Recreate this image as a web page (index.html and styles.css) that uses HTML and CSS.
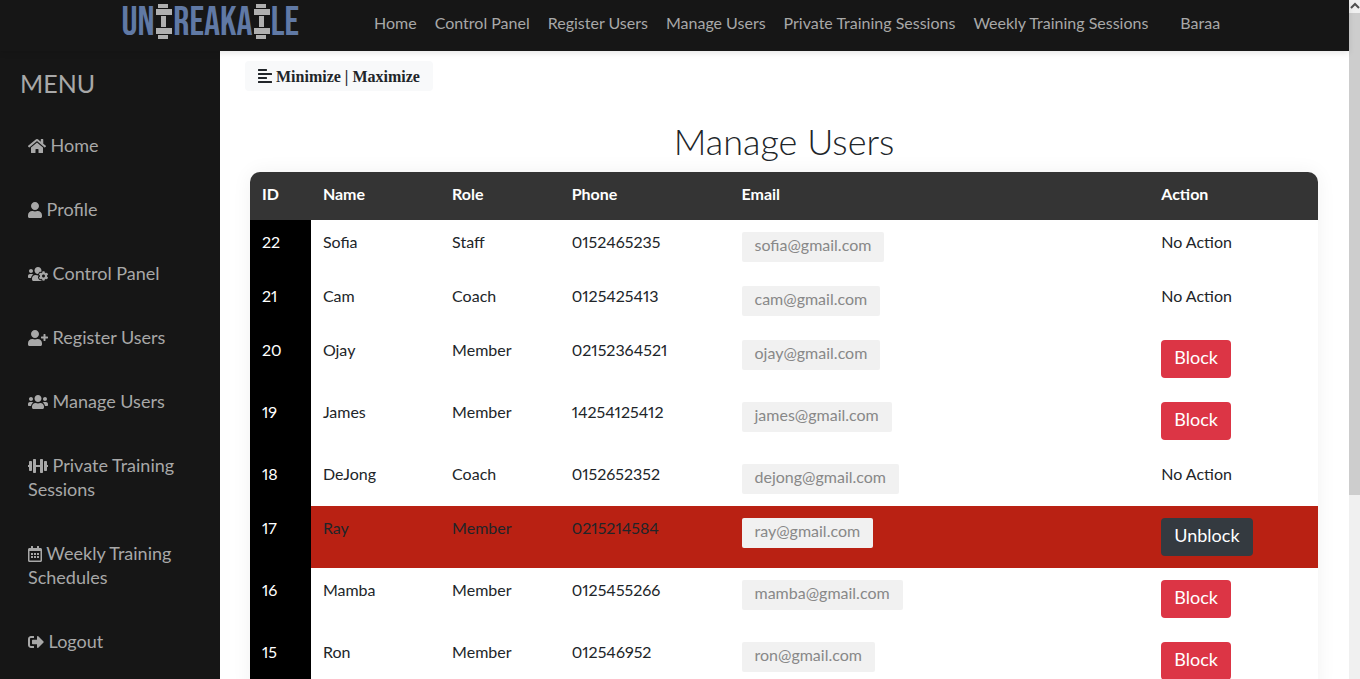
FILE: index.html
```html
<!DOCTYPE html>
<html lang="en">
<head>
<meta charset="utf-8">
<title>Manage Users</title>
<link rel="stylesheet" href="styles.css">
</head>
<body>
<div class="shell">
  <header class="topbar">
    <a class="brand" href="#" aria-label="Unbreakable">
      <svg class="brand-art" viewBox="0 0 176 38" width="176" height="38">
        <g class="brand-text" text-anchor="middle">
          <text x="15" y="31">UN</text>
          <text x="90" y="31">REAKA</text>
          <text x="162" y="31">LE</text>
        </g>
        <g id="bell" fill="#b0b0b0">
          <rect x="35" y="0" width="10" height="4"/>
          <rect x="33" y="5" width="16" height="6"/>
          <rect x="38" y="12" width="5" height="11"/>
          <rect x="33" y="24" width="16" height="6"/>
          <rect x="35" y="31" width="10" height="4"/>
        </g>
        <use href="#bell" x="98"/>
      </svg>
    </a>
    <nav class="topnav">
      <a href="#">Home</a>
      <a href="#">Control Panel</a>
      <a href="#">Register Users</a>
      <a href="#">Manage Users</a>
      <a href="#">Private Training Sessions</a>
      <a href="#">Weekly Training Sessions</a>
      <a href="#" class="account">Baraa</a>
    </nav>
  </header>
  <div class="body">
    <aside class="sidebar">
      <h3 class="menu-title">MENU</h3>
      <nav class="menu">
        <a href="#"><svg class="icon" width="18" height="16" viewBox="0 0 576 512"><path d="M280.37 148.26L96 300.11V464a16 16 0 0 0 16 16l112.06-.29a16 16 0 0 0 15.92-16V368a16 16 0 0 1 16-16h64a16 16 0 0 1 16 16v95.64a16 16 0 0 0 16 16.05L464 480a16 16 0 0 0 16-16V300L295.67 148.26a12.19 12.19 0 0 0-15.3 0zM571.6 251.47L488 182.56V44.05a12 12 0 0 0-12-12h-56a12 12 0 0 0-12 12v72.61L318.47 43a48 48 0 0 0-61 0L4.34 251.47a12 12 0 0 0-1.6 16.9l25.5 31A12 12 0 0 0 45.15 301l235.22-193.74a12.19 12.19 0 0 1 15.3 0L530.9 301a12 12 0 0 0 16.9-1.6l25.5-31a12 12 0 0 0-1.7-16.93z"/></svg> Home</a>
        <a href="#"><svg class="icon" width="14" height="16" viewBox="0 0 448 512"><path d="M224 256c70.7 0 128-57.3 128-128S294.7 0 224 0 96 57.3 96 128s57.3 128 128 128zm89.6 32h-16.7c-22.2 10.2-46.9 16-72.9 16s-50.6-5.8-72.9-16h-16.7C60.2 288 0 348.2 0 422.4V464c0 26.5 21.5 48 48 48h352c26.5 0 48-21.5 48-48v-41.6c0-74.2-60.2-134.4-134.4-134.4z"/></svg> Profile</a>
        <a href="#"><svg class="icon" width="20" height="16" viewBox="0 0 640 512"><path d="M610.5 341.3c2.6-14.1 2.6-28.5 0-42.6l25.8-14.9c3-1.7 4.3-5.2 3.3-8.5-6.7-21.6-18.2-41.2-33.2-57.4-2.3-2.5-6-3.1-9-1.4l-25.8 14.9c-10.9-9.3-23.4-16.5-36.9-21.3v-29.8c0-3.4-2.4-6.4-5.7-7.1-22.3-5-45-4.8-66.2 0-3.3.7-5.7 3.7-5.7 7.1v29.8c-13.5 4.8-26 12-36.9 21.3l-25.8-14.9c-2.9-1.7-6.7-1.1-9 1.4-15 16.2-26.5 35.8-33.2 57.4-1 3.3.4 6.8 3.3 8.5l25.8 14.9c-2.6 14.1-2.6 28.5 0 42.6l-25.8 14.9c-3 1.7-4.3 5.2-3.3 8.5 6.7 21.6 18.2 41.1 33.2 57.4 2.3 2.5 6 3.1 9 1.4l25.8-14.9c10.9 9.3 23.4 16.5 36.9 21.3v29.8c0 3.4 2.4 6.4 5.7 7.1 22.3 5 45 4.8 66.2 0 3.3-.7 5.7-3.7 5.7-7.1v-29.8c13.5-4.8 26-12 36.9-21.3l25.8 14.9c2.9 1.7 6.7 1.1 9-1.4 15-16.2 26.5-35.8 33.2-57.4 1-3.3-.4-6.8-3.3-8.5l-25.8-14.9zM496 368.5c-26.8 0-48.5-21.8-48.5-48.5s21.8-48.5 48.5-48.5 48.5 21.8 48.5 48.5-21.7 48.5-48.5 48.5zM96 224c35.3 0 64-28.7 64-64s-28.7-64-64-64-64 28.7-64 64 28.7 64 64 64zm224 32c1.9 0 3.7-.5 5.6-.6 8.3-21.7 20.5-42.1 36.3-59.2 7.4-8 17.9-12.6 28.9-12.6 6.9 0 13.7 1.8 19.6 5.3l7.9 4.6c.8-.5 1.6-.9 2.4-1.4 7-14.6 11.2-30.8 11.2-48 0-61.9-50.1-112-112-112S208 82.1 208 144c0 61.9 50.1 112 112 112zm105.2 194.5c-2.3-1.2-4.6-2.6-6.8-3.9-8.2 4.8-15.3 9.8-27.5 9.8-10.9 0-21.4-4.6-28.9-12.6-18.3-19.8-32.3-43.9-40.2-69.6-10.7-34.5 24.9-49.7 25.8-50.3-.1-2.6-.1-5.2 0-7.8l-7.9-4.6c-3.8-2.2-7-5-9.8-8.1-3.3.2-6.5.6-9.8.6-24.6 0-47.6-6-68.5-16h-8.3C179.6 288 128 339.6 128 403.2V432c0 26.5 21.5 48 48 48h255.4c-3.7-6-6.2-12.8-6.2-20.3v-9.2zM173.1 274.6C161.5 263.1 145.6 256 128 256H64c-35.3 0-64 28.7-64 64v32c0 17.7 14.3 32 32 32h65.9c6.3-47.4 34.9-87.3 75.2-109.4z"/></svg> Control Panel</a>
        <a href="#"><svg class="icon" width="20" height="16" viewBox="0 0 640 512"><path d="M624 208h-64v-64c0-8.800-7.200-16-16-16h-32c-8.800 0-16 7.200-16 16v64h-64c-8.800 0-16 7.200-16 16v32c0 8.800 7.200 16 16 16h64v64c0 8.800 7.200 16 16 16h32c8.800 0 16-7.200 16-16v-64h64c8.800 0 16-7.200 16-16v-32c0-8.800-7.200-16-16-16zm-400 48c70.700 0 128-57.300 128-128S294.700 0 224 0 96 57.300 96 128s57.300 128 128 128zm89.600 32h-16.700c-22.200 10.200-46.900 16-72.900 16s-50.600-5.800-72.900-16h-16.700C60.200 288 0 348.200 0 422.400V464c0 26.500 21.500 48 48 48h352c26.500 0 48-21.500 48-48v-41.600c0-74.200-60.200-134.400-134.400-134.400z"/></svg> Register Users</a>
        <a href="#"><svg class="icon" width="20" height="16" viewBox="0 0 640 512"><path d="M96 224c35.300 0 64-28.700 64-64s-28.700-64-64-64-64 28.700-64 64 28.700 64 64 64zm448 0c35.300 0 64-28.700 64-64s-28.700-64-64-64-64 28.700-64 64 28.700 64 64 64zm32 32h-64c-17.600 0-33.500 7.100-45.100 18.600 40.300 22.100 68.900 62 75.100 109.400h66c17.700 0 32-14.300 32-32v-32c0-35.300-28.700-64-64-64zm-256 0c61.900 0 112-50.100 112-112S381.900 32 320 32 208 82.100 208 144s50.100 112 112 112zm76.800 32h-8.300c-20.800 10-43.900 16-68.500 16s-47.600-6-68.500-16h-8.300C179.600 288 128 339.600 128 403.200V432c0 26.500 21.500 48 48 48h288c26.500 0 48-21.500 48-48v-28.800c0-63.600-51.600-115.200-115.200-115.200zm-223.700-13.400C161.500 263.100 145.600 256 128 256H64c-35.300 0-64 28.700-64 64v32c0 17.700 14.300 32 32 32h65.900c6.300-47.400 34.900-87.300 75.200-109.400z"/></svg> Manage Users</a>
        <a href="#"><svg class="icon" width="20" height="16" viewBox="0 0 640 512"><path d="M104 96H56c-13.300 0-24 10.700-24 24v104H8c-4.400 0-8 3.600-8 8v48c0 4.400 3.600 8 8 8h24v104c0 13.300 10.700 24 24 24h48c13.300 0 24-10.700 24-24V120c0-13.300-10.700-24-24-24zm528 128h-24V120c0-13.300-10.700-24-24-24h-48c-13.300 0-24 10.700-24 24v272c0 13.300 10.700 24 24 24h48c13.300 0 24-10.700 24-24V288h24c4.400 0 8-3.600 8-8v-48c0-4.400-3.600-8-8-8zM456 32h-48c-13.300 0-24 10.700-24 24v168H256V56c0-13.300-10.700-24-24-24h-48c-13.300 0-24 10.700-24 24v400c0 13.300 10.700 24 24 24h48c13.300 0 24-10.700 24-24V288h128v168c0 13.300 10.700 24 24 24h48c13.300 0 24-10.700 24-24V56c0-13.300-10.700-24-24-24z"/></svg> Private Training Sessions</a>
        <a href="#"><svg class="icon" width="14" height="16" viewBox="0 0 448 512"><path d="M148 288h-40c-6.600 0-12-5.400-12-12v-40c0-6.600 5.400-12 12-12h40c6.600 0 12 5.400 12 12v40c0 6.600-5.400 12-12 12zm108-12v-40c0-6.600-5.400-12-12-12h-40c-6.600 0-12 5.400-12 12v40c0 6.600 5.400 12 12 12h40c6.600 0 12-5.400 12-12zm96 0v-40c0-6.600-5.400-12-12-12h-40c-6.600 0-12 5.400-12 12v40c0 6.600 5.400 12 12 12h40c6.600 0 12-5.400 12-12zm-96 96v-40c0-6.600-5.400-12-12-12h-40c-6.600 0-12 5.400-12 12v40c0 6.600 5.400 12 12 12h40c6.600 0 12-5.400 12-12zm-96 0v-40c0-6.600-5.400-12-12-12h-40c-6.600 0-12 5.400-12 12v40c0 6.600 5.400 12 12 12h40c6.600 0 12-5.400 12-12zm192 0v-40c0-6.600-5.400-12-12-12h-40c-6.600 0-12 5.400-12 12v40c0 6.600 5.400 12 12 12h40c6.600 0 12-5.400 12-12zm96-260v352c0 26.500-21.500 48-48 48H48c-26.500 0-48-21.500-48-48V112c0-26.500 21.500-48 48-48h48V12c0-6.600 5.400-12 12-12h40c6.600 0 12 5.400 12 12v52h128V12c0-6.600 5.400-12 12-12h40c6.600 0 12 5.400 12 12v52h48c26.500 0 48 21.500 48 48zm-48 346V160H48v298c0 3.300 2.700 6 6 6h340c3.300 0 6-2.700 6-6z"/></svg> Weekly Training Schedules</a>
        <a href="#"><svg class="icon" width="16" height="16" viewBox="0 0 512 512"><path d="M497 273L329 441c-15 15-41 4.500-41-17v-96H152c-13.300 0-24-10.700-24-24v-96c0-13.300 10.700-24 24-24h136V88c0-21.400 25.900-32 41-17l168 168c9.300 9.400 9.300 24.600 0 34zM192 436v-40c0-6.600-5.400-12-12-12H96c-17.700 0-32-14.300-32-32V160c0-17.700 14.300-32 32-32h84c6.600 0 12-5.400 12-12V76c0-6.600-5.400-12-12-12H96c-53 0-96 43-96 96v192c0 53 43 96 96 96h84c6.600 0 12-5.400 12-12z"/></svg> Logout</a>
      </nav>
    </aside>
    <main class="content">
      <button class="toggle" type="button"><svg class="icon" width="14" height="16" viewBox="0 0 448 512"><path d="M12.830 352h262.340A12.820 12.820 0 0 0 288 339.170v-38.340A12.820 12.820 0 0 0 275.170 288H12.830A12.820 12.820 0 0 0 0 300.830v38.340A12.820 12.820 0 0 0 12.830 352zm0-256h262.340A12.820 12.820 0 0 0 288 83.170V44.830A12.820 12.820 0 0 0 275.170 32H12.830A12.820 12.820 0 0 0 0 44.830v38.340A12.820 12.820 0 0 0 12.830 96zM432 160H16a16 16 0 0 0-16 16v32a16 16 0 0 0 16 16h416a16 16 0 0 0 16-16v-32a16 16 0 0 0-16-16zm0 256H16a16 16 0 0 0-16 16v32a16 16 0 0 0 16 16h416a16 16 0 0 0 16-16v-32a16 16 0 0 0-16-16z"/></svg> Minimize | Maximize</button>
      <h1 class="title">Manage Users</h1>
      <table class="users">
        <colgroup><col class="c-id"><col class="c-name"><col class="c-role"><col class="c-phone"><col class="c-email"><col class="c-action"></colgroup>
        <thead>
          <tr><th>ID</th><th>Name</th><th>Role</th><th>Phone</th><th>Email</th><th>Action</th></tr>
        </thead>
        <tbody>
          <tr><td>22</td><td>Sofia</td><td>Staff</td><td>0152465235</td><td><a class="mail" href="#">sofia@gmail.com</a></td><td>No Action</td></tr>
          <tr><td>21</td><td>Cam</td><td>Coach</td><td>0125425413</td><td><a class="mail" href="#">cam@gmail.com</a></td><td>No Action</td></tr>
          <tr><td>20</td><td>Ojay</td><td>Member</td><td>02152364521</td><td><a class="mail" href="#">ojay@gmail.com</a></td><td><button class="btn" type="button">Block</button></td></tr>
          <tr><td>19</td><td>James</td><td>Member</td><td>14254125412</td><td><a class="mail" href="#">james@gmail.com</a></td><td><button class="btn" type="button">Block</button></td></tr>
          <tr><td>18</td><td>DeJong</td><td>Coach</td><td>0152652352</td><td><a class="mail" href="#">dejong@gmail.com</a></td><td>No Action</td></tr>
          <tr class="blocked"><td>17</td><td>Ray</td><td>Member</td><td>0215214584</td><td><a class="mail" href="#">ray@gmail.com</a></td><td><button class="btn btn-dark" type="button">Unblock</button></td></tr>
          <tr><td>16</td><td>Mamba</td><td>Member</td><td>0125455266</td><td><a class="mail" href="#">mamba@gmail.com</a></td><td><button class="btn" type="button">Block</button></td></tr>
          <tr><td>15</td><td>Ron</td><td>Member</td><td>012546952</td><td><a class="mail" href="#">ron@gmail.com</a></td><td><button class="btn" type="button">Block</button></td></tr>
        </tbody>
      </table>
    </main>
  </div>
</div>
<div class="scrollbar" aria-hidden="true">
  <svg class="scroll-arrow" width="11" height="13" viewBox="0 0 11 13"><path d="M2 8l4-4 4 4" fill="none" stroke="#505050" stroke-width="2"/></svg>
  <div class="scroll-thumb"></div>
</div>
</body>
</html>
```
FILE: styles.css
```css
* { box-sizing: border-box; }

body {
  margin: 0;
  height: 100vh;
  display: flex;
  overflow: hidden;
  background: #fff;
  color: #212529;
  font-family: Lato, "Open Sans", sans-serif;
  font-size: 16px;
  line-height: 24px;
}

a { color: inherit; text-decoration: none; }
button { border: 0; font-family: inherit; color: inherit; }

.shell {
  flex: 1;
  min-width: 0;
  display: flex;
  flex-direction: column;
}

.topbar {
  display: flex;
  align-items: flex-start;
  gap: 75px;
  padding: 4px 0 9px 123px;
  background: #161616;
  color: #a8a8a8;
  box-shadow: 0 2px 6px rgba(0, 0, 0, .1);
  z-index: 1;
}
.brand { display: block; height: 38px; }
.brand-art { display: block; overflow: visible; }
.brand-text {
  fill: #6079a5;
  font-family: "Bebas Neue", "Roboto Condensed", "Liberation Sans Narrow", "Liberation Sans", sans-serif;
  font-weight: 400;
  font-size: 40px;
}
.topnav {
  display: flex;
  gap: 18px;
  padding-top: 7px;
  white-space: nowrap;
}
.account { margin-left: 14px; }

.body { flex: 1; display: flex; min-height: 0; }

.sidebar {
  flex: 0 0 220px;
  padding-top: 17px;
  background: #161616;
  color: #a8a8a8;
}
.menu-title {
  margin: 0 0 15px;
  padding-left: 20px;
  font-weight: 400;
  font-size: 25px;
  line-height: 30px;
}
.menu { display: flex; flex-direction: column; }
.menu a {
  padding: 20px 28px;
  font-size: 18px;
}
.icon { fill: currentColor; vertical-align: -2px; }

.content { flex: 1; min-width: 0; padding: 10px 31px 0 25px; }

.toggle {
  display: block;
  padding: 2px 13px 0;
  border-radius: 4px;
  background: #f8f9fa;
  font-family: "Liberation Serif", serif;
  font-weight: 700;
  font-size: 16px;
  line-height: 28px;
}

.title {
  margin: 28px 0 9px 5px;
  font-weight: 300;
  font-size: 36px;
  line-height: 44px;
  text-align: center;
}

.users {
  width: calc(100% - 5px);
  margin-left: 5px;
  table-layout: fixed;
  border-collapse: collapse;
  border-radius: 10px 10px 0 0;
  overflow: hidden;
  box-shadow: 0 0 20px rgba(0, 0, 0, .06);
}
.c-id { width: 5.7%; }
.c-name { width: 12.1%; }
.c-role { width: 11.2%; }
.c-phone { width: 15.9%; }
.c-email { width: 39.3%; }
.c-action { width: 15.8%; }

.users th, .users td {
  padding: 12px;
  text-align: left;
  vertical-align: top;
}
.users th { padding: 10px 12px 14px; background: #343434; color: #fff; font-weight: 700; }
.users td { padding: 10px 12px 12px; font-variant-numeric: proportional-nums; }
.users td:first-child { background: #000; color: #fff; }
.users td:nth-child(5), .users td:nth-child(6):has(.btn) { padding-top: 12px; }
.blocked { background: #b92113; }

.mail {
  display: block;
  width: fit-content;
  padding: 0 13px 4px;
  border-radius: 2px;
  background: #f1f1f1;
  color: #888;
  line-height: 26px;
}
.btn {
  display: block;
  padding: 0 13px 4px;
  border-radius: 4px;
  background: #dc3545;
  color: #fff;
  font-size: 18px;
  line-height: 34px;
}
.btn-dark { background: #343a40; }

.scrollbar {
  flex: 0 0 11px;
  background: #f0f0f0;
}
.scroll-arrow { display: block; }
.scroll-thumb { height: 71%; background: #cdcdcd; }
```
